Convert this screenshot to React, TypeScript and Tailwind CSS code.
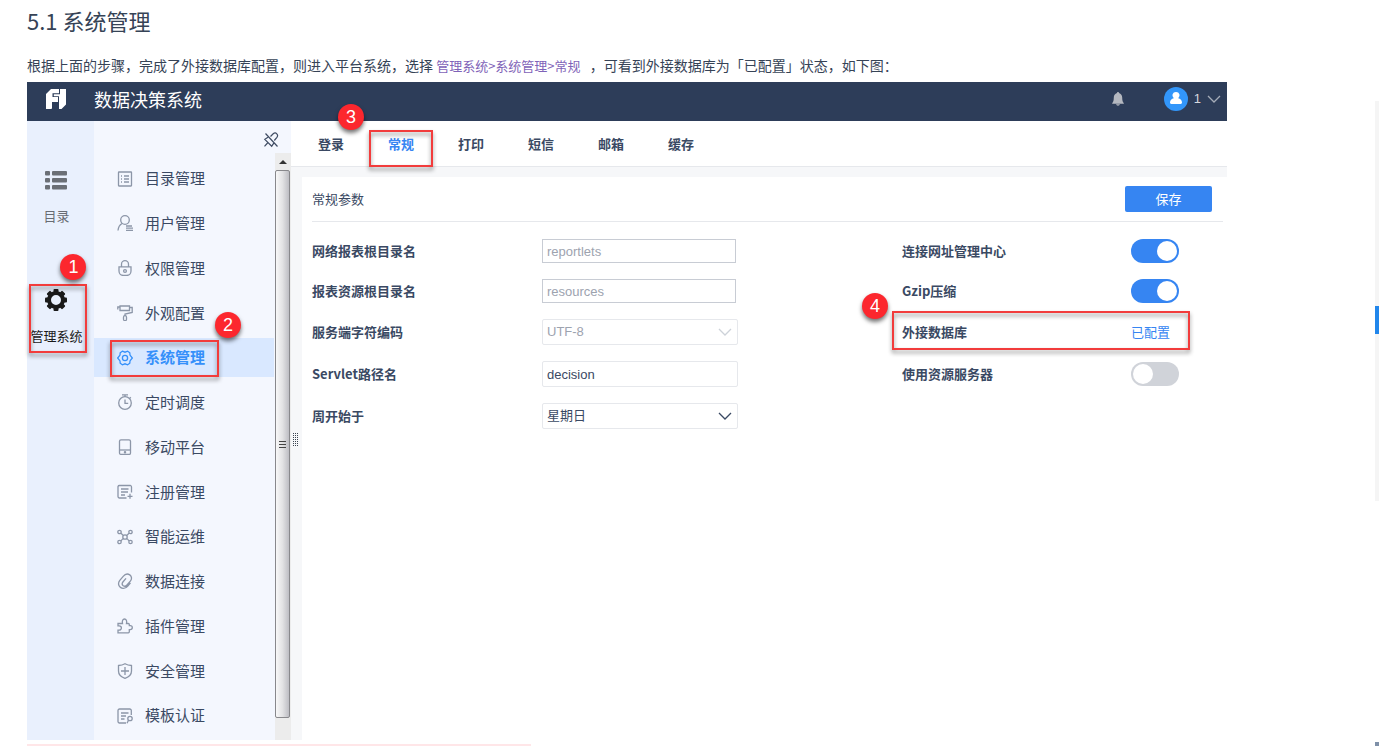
import type { ReactNode } from "react";
import clsx from "clsx";

type MenuEntry = {
    label: string;
    icon: ReactNode;
    active?: boolean;
};

const menuEntries: MenuEntry[] = [
    {
        label: "目录管理",
        icon: (
            <>
                <rect x="1.5" y="1" width="13" height="14" rx="0.5" />
                <path d="M4 5h1M7 5h5M4 8h1M7 8h5M4 11h1M7 11h5" />
            </>
        ),
    },
    {
        label: "用户管理",
        icon: (
            <>
                <circle cx="8" cy="5" r="4.3" />
                <path d="M5 8.5C2.5 10 1.3 12 1 15.5M9 11h6M9 13.2h7M9 15.4h7" />
            </>
        ),
    },
    {
        label: "权限管理",
        icon: (
            <>
                <path d="M4.5 7V4.2a3.5 3.5 0 0 1 7 0V7" />
                <path d="M2 6.8h12v4.200a4.500 4.500 0 0 1-4.500 4.500h-3A4.500 4.500 0 0 1 2 11z" />
                <circle cx="8" cy="11" r="1.4" />
            </>
        ),
    },
    {
        label: "外观配置",
        icon: (
            <>
                <path d="M3 1h9.500v4.500H3zM3 2H.800v2.500M12.500 2.500h2.700v5L8 9v2" />
                <rect x="6.500" y="10.700" width="3" height="5" rx="1.500" />
            </>
        ),
    },
    {
        label: "系统管理",
        active: true,
        icon: (
            <>
                <path d="M5.400 1.200 8 2.200l2.600-1 2.200 1.600.200 2.300L15.300 8 13 10.900l-.200 2.300-2.200 1.600-2.600-1-2.600 1-2.200-1.600-.200-2.300L.700 8 3 5.100l.200-2.300z" />
                <circle cx="8" cy="8" r="2.600" />
            </>
        ),
    },
    {
        label: "定时调度",
        icon: (
            <>
                <circle cx="8" cy="9" r="6.300" />
                <path d="M5 .800h6M8 .800v1.900M8 5.500V9.300h3.200M12.800 3.200l1 1" />
            </>
        ),
    },
    {
        label: "移动平台",
        icon: (
            <>
                <rect x="2.500" y=".800" width="11" height="14.600" rx="1.500" />
                <path d="M2.500 11h11" />
                <circle cx="8" cy="13.300" r=".6" />
            </>
        ),
    },
    {
        label: "注册管理",
        icon: (
            <>
                <path d="M9.500 14H2.500A1.500 1.500 0 0 1 1 12.500v-10A1.500 1.500 0 0 1 2.500 1.500h11A1.500 1.500 0 0 1 14.500 3v5.500" />
                <path d="M4 5h7.500M4 8h7M4 11h4M13 9.800v5M10.500 12.300h5" />
            </>
        ),
    },
    {
        label: "智能运维",
        icon: (
            <>
                <circle cx="2.500" cy="3" r="1.700" />
                <circle cx="13.500" cy="3" r="1.700" />
                <circle cx="2.500" cy="13" r="1.700" />
                <circle cx="13.500" cy="13" r="1.700" />
                <circle cx="8" cy="8" r="2.200" />
                <path d="M4 4.200c1 1.300 1.500 1.800 2.400 2.300M12 4.200c-1 1.300-1.500 1.800-2.400 2.300M4 11.800c1-1.300 1.500-1.800 2.400-2.300M12 11.800c-1-1.300-1.500-1.800-2.400-2.300" />
            </>
        ),
    },
    {
        label: "数据连接",
        icon: (
            <path d="M13.500 9.800 10.800 13c-2 2.400-5.200 2.900-7.400 1.400-2.300-1.600-2.400-4.700-.600-7L6.200 3.300C8 1.100 10.800.500 12.800 1.900c2 1.400 2.200 4 .700 6L10 12c-1 1.200-2.600 1.500-3.800.700-1.200-.900-1.200-2.500-.300-3.700L9 5.300" />
        ),
    },
    {
        label: "插件管理",
        icon: (
            <path d="M1 14.800h10.300a1 1 0 0 0 1-1v-2.200h1a2 2 0 0 0 0-4h-1V6.500a1 1 0 0 0-1-1h-1.800c.600-2.600-.300-4.500-2-4.500S4.900 2.900 5.500 5.500H1v2.300h1.200a2.200 2.200 0 0 1 0 4.400H1z" />
        ),
    },
    {
        label: "安全管理",
        icon: <path d="M8 .800c2 1.100 4.200 1.600 6.500 1.700V8c0 3.800-2.500 6-6.500 7.300C4 14 1.500 11.800 1.500 8V2.500C3.800 2.400 6 1.900 8 .800zM8 4v8M4 8h8" />,
    },
    {
        label: "模板认证",
        icon: (
            <>
                <path d="M9 15H2.500A1.500 1.500 0 0 1 1 13.500v-11A1.500 1.500 0 0 1 2.500 1h10.300A1.500 1.500 0 0 1 14.300 2.500V7M4 5h7.500M4 8h5M4 11h3.500" />
                <circle cx="13" cy="10.500" r="2.200" />
                <path d="M11.500 12.300 10 15.300" />
            </>
        ),
    },
];

const tabs = ["登录", "常规", "打印", "短信", "邮箱", "缓存"];

/**
 * Red frame with a numbered badge, laid over the control it points at.
 */
const Marker = ({ step, frame, badge }: { step: number; frame: string; badge: string }) => (
    <>
        <span
            className={clsx(
                "pointer-events-none absolute z-10 border-2 border-[#f23c3c] drop-shadow-[0_3px_2px_rgba(0,0,0,0.45)]",
                frame
            )}
        />
        <span
            className={clsx(
                "pointer-events-none absolute z-20 flex size-[26px] items-center justify-center rounded-full bg-[#fc272e] font-['Liberation_Sans',sans-serif] text-lg font-normal text-white shadow-[0_3px_4px_rgba(0,0,0,0.55)]",
                badge
            )}
        >
            {step}
        </span>
    </>
);

const Chevron = ({ className }: { className: string }) => (
    <svg viewBox="0 0 14 8" className={clsx("pointer-events-none h-2 w-3.5", className)} fill="none" stroke="currentColor" strokeWidth="1.3">
        <path d="M1 1l6 6 6-6" />
    </svg>
);

const TopBar = () => (
    <header className="flex h-[39px] items-center bg-[#2d3d59] pr-[6px] pb-1.5 pl-[19px]">
        <svg viewBox="0 0 20 20" className="size-5" fill="#fff">
            <path d="M0 20V5l5-5h8v4.200H6.500V8H12v5H6v6.500l-1 .5z" />
            <path d="M14 0h6v15.500L15.500 20H13V7.200H7.800V5.200H14z" />
        </svg>
        <h1 className="ml-7 flex-1 text-lg leading-8 text-white">数据决策系统</h1>
        <button aria-label="消息" className="text-[#b4b8c0]">
            <svg viewBox="0 0 12 14" className="h-3.5 w-3" fill="currentColor">
                <path d="M6 0c.700 0 1 .500 1 1 2 .600 3.200 2.300 3.200 4.500 0 3 .500 4.500 1.600 5.500v.700H.200V11c1.100-1 1.600-2.500 1.600-5.500C1.800 3.300 3 1.600 5 1c0-.500.300-1 1-1zM4 12.300h4c-.300.900-1 1.400-2 1.400s-1.700-.500-2-1.400z" />
            </svg>
        </button>
        <button className="ml-10 flex items-center text-[#d5d8de]">
            <svg viewBox="0 0 24 24" className="size-6">
                <circle cx="12" cy="12" r="12" fill="#3296fa" />
                <path
                    fill="#fff"
                    d="M12 5a3.500 3.500 0 0 1 2.200 6.300c2.200.500 3.800 2 3.800 4.300 0 .800-.500 1.400-1.300 1.400H7.300C6.500 17 6 16.400 6 15.600c0-2.300 1.600-3.800 3.800-4.300A3.500 3.500 0 0 1 12 5z"
                />
            </svg>
            <span className="mx-1.5 font-['Liberation_Sans',sans-serif] text-[13px]">1</span>
            <Chevron className="text-[#a5acb8]" />
        </button>
    </header>
);

const Rail = () => (
    <nav className="flex w-[67px] shrink-0 flex-col items-center gap-[63px] bg-[#e9f0fd] pt-12 text-[13px] leading-5">
        <a href="#catalog" className="flex h-[57px] flex-col items-center justify-between whitespace-nowrap pr-2 text-[#686c73]">
            <svg viewBox="0 0 22 22" className="size-[22px]" fill="#6b6f76">
                <rect x="0" y="2" width="5" height="4.500" rx="1" />
                <rect x="7" y="2" width="15" height="4.500" rx="1" />
                <rect x="0" y="9" width="5" height="4.500" rx="1" />
                <rect x="7" y="9" width="15" height="4.500" rx="1" />
                <rect x="0" y="16" width="5" height="4.500" rx="1" />
                <rect x="7" y="16" width="15" height="4.500" rx="1" />
            </svg>
            目录
        </a>
        <a href="#manage" className="relative flex h-[57px] flex-col items-center justify-between whitespace-nowrap pr-2 text-[#1a1a1a]">
            <svg viewBox="0 0 22 22" className="size-[22px]">
                <circle cx="11" cy="11" r="7" fill="none" stroke="currentColor" strokeWidth="4" />
                <g fill="currentColor">
                    <rect x="8.500" y="0" width="5" height="5" rx="1" />
                    <rect x="8.500" y="17" width="5" height="5" rx="1" />
                    <rect x="0" y="8.500" width="5" height="5" rx="1" />
                    <rect x="17" y="8.500" width="5" height="5" rx="1" />
                    <g transform="rotate(45 11 11)">
                        <rect x="8.500" y="0" width="5" height="5" rx="1" />
                        <rect x="8.500" y="17" width="5" height="5" rx="1" />
                        <rect x="0" y="8.500" width="5" height="5" rx="1" />
                        <rect x="17" y="8.500" width="5" height="5" rx="1" />
                    </g>
                </g>
            </svg>
            管理系统
            <Marker step={1} frame="-top-[5px] -left-px h-[69px] w-[58px]" badge="-top-[35px] left-[30px]" />
        </a>
    </nav>
);

const SideMenu = () => (
    <div className="flex w-[197px] shrink-0 flex-col bg-[#f4f7fe]">
        <div className="flex h-8 items-start justify-end pt-[11px] pr-3">
            <button aria-label="取消固定" className="text-[#3f4c63]">
                <svg viewBox="0 0 16 16" className="size-4" fill="none" stroke="currentColor" strokeWidth="1.200">
                    <path d="M2.500 1.500l12 13M7.500 4.500l2.700-2.700c1.200-1 2.700-.900 3.600 0s1 2.300.100 3.500L11.300 8.500M5 5.200 1.800 7.300l6.900 6.900 2.300-3.300M5 10.500l-3.500 3.800" />
                </svg>
            </button>
        </div>
        <div className="flex flex-1">
            <ul className="flex flex-1 flex-col justify-between pt-1.5 pr-px pb-[5px]">
                {menuEntries.map(({ label, icon, active }) => (
                    <li key={label} className="relative">
                        <a
                            href="#menu"
                            className={clsx(
                                "flex h-[39px] items-center gap-3 pl-[23px] text-[15px]",
                                active ? "bg-[#d9e8ff] font-bold text-[#3590fa]" : "text-[#3a4963]"
                            )}
                        >
                            <svg
                                viewBox="0 0 16 16"
                                className={clsx("size-4", active ? "text-[#3590fa]" : "text-[#8c96a8]")}
                                fill="none"
                                stroke="currentColor"
                                strokeWidth="1.300"
                            >
                                {icon}
                            </svg>
                            {label}
                        </a>
                        {active && <Marker step={2} frame="top-0.5 left-4 h-[37px] w-[109px]" badge="-top-[26px] left-[121px]" />}
                    </li>
                ))}
            </ul>
            <div className="flex w-4 flex-col bg-[#ececec]">
                <div className="flex h-[17px] items-center justify-center">
                    <svg viewBox="0 0 8 4" className="h-1 w-2" fill="#333">
                        <path d="M4 0l4 4H0z" />
                    </svg>
                </div>
                <div className="mb-[22px] flex w-[15px] flex-1 flex-col items-center justify-center gap-0.5 rounded-[2px] border border-[#88888c] bg-linear-to-r from-[#f8f8f8] via-[#e2e2e4] via-50% to-[#bdbdc3]">
                    <i className="h-px w-[7px] bg-[#444]" />
                    <i className="h-px w-[7px] bg-[#444]" />
                    <i className="h-px w-[7px] bg-[#444]" />
                </div>
            </div>
        </div>
    </div>
);

const TabBar = () => (
    <div role="tablist" className="flex h-[46px] border-b border-[#e6e8ec] bg-white pl-[5px] text-[13px] font-bold text-[#3a4963]">
        {tabs.map((tab) => {
            const active = tab === "常规";
            return (
                <button
                    key={tab}
                    role="tab"
                    aria-selected={active}
                    className={clsx("relative w-[70px]", active && "text-[#3685f2]")}
                >
                    {tab}
                    {active && <Marker step={3} frame="top-[9px] left-[3px] h-[37px] w-[64px]" badge="-top-[17px] -left-7" />}
                </button>
            );
        })}
    </div>
);

const Toggle = ({ id, on }: { id: string; on?: boolean }) => (
    <input
        id={id}
        type="checkbox"
        role="switch"
        defaultChecked={on}
        className="h-6 w-12 appearance-none rounded-full bg-[#d0d3d9] p-0.5 before:block before:size-5 before:rounded-full before:bg-white checked:bg-[#3685f2] checked:before:translate-x-6"
    />
);

const fieldClass = "px-1 font-['Liberation_Sans','Noto_Sans_CJK_SC',sans-serif] text-[13px]";

const SettingsForm = () => (
    <form className="flex-1 bg-white pr-1 pl-2.5 text-[13px] text-[#3a4963]">
        <div className="flex h-[45px] items-center justify-between border-b border-[#e6e8ec] pr-[11px]">
            <h3>常规参数</h3>
            <button type="button" className="h-[26px] w-[87px] rounded-[2px] bg-[#3685f2] text-white">
                保存
            </button>
        </div>
        <div className="grid grid-cols-[230px_minmax(0,1fr)_229px_92px] items-center gap-y-4 pt-[17px]">
            <label htmlFor="report-root" className="font-bold">网络报表根目录名</label>
            <input id="report-root" placeholder="reportlets" className={clsx(fieldClass, "h-6 w-[194px] border border-[#c8ccd4] placeholder:text-[#9da3af]")} />
            <label htmlFor="url-center" className="font-bold">连接网址管理中心</label>
            <Toggle id="url-center" on />

            <label htmlFor="resource-root" className="font-bold">报表资源根目录名</label>
            <input id="resource-root" placeholder="resources" className={clsx(fieldClass, "h-6 w-[194px] border border-[#c8ccd4] placeholder:text-[#9da3af]")} />
            <label htmlFor="gzip" className="font-bold">Gzip压缩</label>
            <Toggle id="gzip" on />

            <label htmlFor="charset" className="font-bold">服务端字符编码</label>
            <div className="relative w-[196px]">
                <select id="charset" disabled className={clsx(fieldClass, "block h-[26px] w-full appearance-none rounded-[2px] border border-[#e6e8ec] text-[#9da3af] opacity-100")}>
                    <option>UTF-8</option>
                </select>
                <Chevron className="absolute top-[9px] right-1.5 text-[#cdd2d9]" />
            </div>
            <div className="relative col-span-2 grid grid-cols-[229px_92px]">
                <span className="font-bold">外接数据库</span>
                <a href="#database" className="text-[#3685f2]">已配置</a>
                <Marker step={4} frame="-top-[11px] -left-2.5 h-[39px] w-[298px]" badge="-top-[29px] -left-10" />
            </div>

            <label htmlFor="servlet" className="font-bold">Servlet路径名</label>
            <input id="servlet" defaultValue="decision" className={clsx(fieldClass, "h-[26px] w-[196px] rounded-[2px] border border-[#e6e8ec]")} />
            <label htmlFor="resource-server" className="font-bold">使用资源服务器</label>
            <Toggle id="resource-server" />

            <label htmlFor="week-start" className="font-bold">周开始于</label>
            <div className="relative w-[196px]">
                <select id="week-start" className={clsx(fieldClass, "block h-[26px] w-full appearance-none rounded-[2px] border border-[#e6e8ec]")}>
                    <option>星期日</option>
                </select>
                <Chevron className="absolute top-[9px] right-1.5 text-[#3a4963]" />
            </div>
        </div>
    </form>
);

const App = () => {
    return (
        <div className="flex min-h-screen bg-white font-['Noto_Sans_CJK_SC',sans-serif] text-[#364356]">
            <main className="flex-1 pl-[27px]">
                <h2 className="text-[22px] leading-10">5.1 系统管理</h2>
                <p className="mt-[9px] text-sm leading-8">
                    根据上面的步骤，完成了外接数据库配置，则进入平台系统，选择{" "}
                    <a href="#general" className="mr-1.5 text-[13px] text-[#7f63b8]">
                        管理系统&gt;系统管理&gt;常规
                    </a>{" "}
                    ，可看到外接数据库为「已配置」状态，如下图：
                </p>
                <section>
                    <TopBar />
                    <div className="flex min-h-[619px]">
                        <Rail />
                        <SideMenu />
                        <div className="flex min-w-0 flex-1 flex-col bg-[#f6f7f9]">
                            <TabBar />
                            <div className="flex flex-1 pt-2.5">
                                <div className="flex w-[11px] flex-col pt-[256px] pl-0.5">
                                    <svg viewBox="0 0 6 14" className="h-3.5 w-1.5" stroke="#3a4350" strokeWidth="1" strokeDasharray="1 1">
                                        <path d="M.5 0v14M2.500 0v14M4.500 0v14" />
                                    </svg>
                                </div>
                                <SettingsForm />
                            </div>
                        </div>
                    </div>
                </section>
                <div className="mt-1 h-0.5 w-[504px] bg-[#ffe6e8]" />
            </main>
            <aside className="mr-px flex w-[152px] flex-col items-end justify-between">
                <div className="mt-[101px] h-[400px] w-1 bg-[#f5f5f5] pt-[205px]">
                    <div className="h-7 bg-[#2186eb]" />
                </div>
                <span className="h-1 w-1 bg-[#7f90a8]" />
            </aside>
        </div>
    );
};

export default App;
